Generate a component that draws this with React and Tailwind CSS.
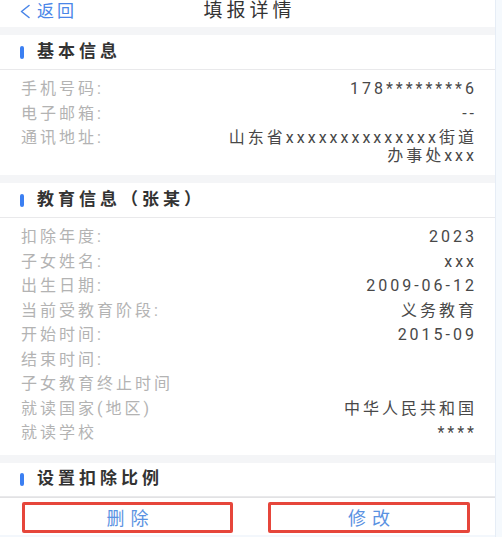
import React from 'react';

const basic = [
  { label: '手机号码:', value: '178********6' },
  { label: '电子邮箱:', value: '--' },
];

const edu = [
  { label: '扣除年度:', value: '2023' },
  { label: '子女姓名:', value: 'xxx' },
  { label: '出生日期:', value: '2009-06-12' },
  { label: '当前受教育阶段:', value: '义务教育' },
  { label: '开始时间:', value: '2015-09' },
  { label: '结束时间:', value: '' },
  { label: '子女教育终止时间', value: '' },
  { label: '就读国家(地区)', value: '中华人民共和国' },
  { label: '就读学校', value: '****' },
];

const SectionTitle = ({ children, h }) => (
  <div className={`flex items-center bg-white border-b border-[#e9e9eb] pl-[20px] ${h}`}>
    <span className="w-[4px] h-[13px] rounded-full bg-[#3b7ff2]" />
    <span className="ml-[13px] text-[17px] font-bold tracking-[4px] text-[#333]">{children}</span>
  </div>
);

const Row = ({ label, value }) => (
  <div className="flex justify-between h-[24.5px] leading-[24.5px]">
    <span className="text-[#b3b3b3]">{label}</span>
    <span className="text-[#484848]">{value}</span>
  </div>
);

const Band = () => <div className="h-[8px] bg-[#f4f5f7]" />;

export default function App() {
  return (
    <div
      className="flex w-[502px] h-[537px] overflow-hidden bg-[#f3f7fc]"
      style={{ fontFamily: 'Roboto, "Noto Sans CJK SC", sans-serif' }}
    >
      <div className="w-[495px] flex flex-col bg-white">
        {/* header */}
        <div className="h-[27px] flex items-start pt-[1px] relative">
          <div className="flex items-center pl-[19px] text-[#4a86e8]">
            <svg width="12" height="15" viewBox="0 0 12 15" fill="none">
              <path d="M10 1.5 L2.5 7.5 L10 13.5" stroke="#4a86e8" strokeWidth="1.6" strokeLinecap="round" strokeLinejoin="round" />
            </svg>
            <span className="ml-[6px] text-[17px] tracking-[3px] leading-[20px]">返回</span>
          </div>
          <div className="absolute left-0 right-0 top-[1px] text-center text-[19px] tracking-[4px] leading-[20px] text-[#333] pl-[4px]">
            填报详情
          </div>
        </div>
        <Band />

        <SectionTitle h="h-[35px]">基本信息</SectionTitle>
        <div className="pl-[21px] pr-[18px] pt-[7px] pb-[10px] text-[16px] tracking-[3px]">
          {basic.map((r) => (
            <Row key={r.label} {...r} />
          ))}
          <div className="flex justify-between">
            <span className="text-[#b3b3b3] leading-[24.5px]">通讯地址:</span>
            <span className="text-[#484848] text-right leading-[18px] pt-[3px]">
              山东省xxxxxxxxxxxxxx街道
              <br />
              办事处xxx
            </span>
          </div>
        </div>
        <Band />

        <SectionTitle h="h-[35px]">教育信息（张某）</SectionTitle>
        <div className="pl-[21px] pr-[18px] pt-[7px] pb-[9px] text-[16px] tracking-[3px]">
          {edu.map((r) => (
            <Row key={r.label} {...r} />
          ))}
        </div>
        <Band />

        <SectionTitle h="h-[34px]">设置扣除比例</SectionTitle>

        {/* bottom bar */}
        <div className="flex items-center h-[38px] pt-[2px] pl-[22px] pr-[25px] gap-[35px] bg-white border-t border-[#e2e2e4]">
          <button className="h-[31px] w-[211px] border-[3px] border-[#e6463b] rounded-[2px] bg-white text-[18px] tracking-[6px] pl-[6px] text-[#5a92e2]">
            删除
          </button>
          <button className="h-[31px] w-[202px] border-[3px] border-[#e6463b] rounded-[2px] bg-white text-[18px] tracking-[6px] pl-[6px] text-[#5a92e2]">
            修改
          </button>
        </div>
        <div className="flex-1 bg-[#f3f7fc]" />
      </div>
      <div className="flex-1 border-l border-[#e6edf6] bg-[#f5f9fd]" />
    </div>
  );
}
